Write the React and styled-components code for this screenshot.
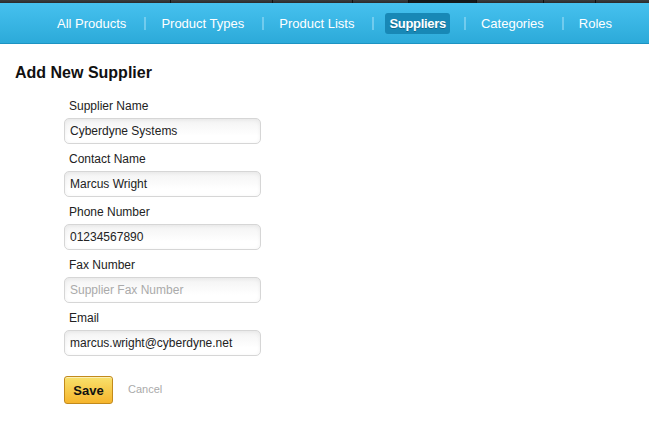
import React from "react";
import styled, { createGlobalStyle } from "styled-components";

const Global = createGlobalStyle`
  html, body { margin: 0; padding: 0; background: #fff; }
  body { font-family: "Liberation Sans", Arial, sans-serif; }
`;

const Page = styled.div`
  width: 649px;
  height: 426px;
  overflow: hidden;
  display: flex;
  flex-direction: column;
`;

const TopStrip = styled.div`
  display: flex;
  height: 3px;
  background: #111;
  gap: 1px;
`;

const StripSeg = styled.div`
  width: ${(p) => p.$w}px;
  flex: ${(p) => (p.$grow ? 1 : "none")};
  background: ${(p) => (p.$dark ? "#15191b" : "linear-gradient(#3a3d3f, #2a2c2e)")};
`;

const NavBar = styled.nav`
  height: 40px;
  display: flex;
  align-items: center;
  padding-left: 53px;
  background: linear-gradient(#46c1ef, #2caad9);
  border-bottom: 1px solid #1d93c2;
`;

const NavItem = styled.a`
  flex: none;
  white-space: nowrap;
  font-family: "Liberation Sans", Arial, sans-serif;
  font-size: 13px;
  color: #fff;
  padding: 3px 4px;
  line-height: 15px;
  border-radius: 3px;
  font-weight: ${(p) => (p.$active ? 700 : 400)};
  letter-spacing: ${(p) => (p.$active ? "-0.3px" : "0")};
  background: ${(p) => (p.$active ? "#1888b6" : "transparent")};
  text-shadow: ${(p) => (p.$active ? "0 1px 0 rgba(0,0,0,0.25)" : "none")};
`;

const NavSep = styled.span`
  flex: none;
  width: 2px;
  height: 13px;
  margin: 0 11px 0 14px;
  background: rgba(170, 225, 248, 0.5);
`;

const Content = styled.main`
  padding: 19px 15px 0 15px;
`;

const Title = styled.h2`
  margin: 0;
  font-size: 16px;
  line-height: 20px;
  font-weight: 700;
  color: #111;
`;

const Form = styled.form`
  margin-top: 16px;
  margin-left: 49px;
  display: flex;
  flex-direction: column;
`;

const Field = styled.div`
  display: flex;
  flex-direction: column;
  margin-bottom: 8px;
`;

const Label = styled.label`
  font-size: 12px;
  line-height: 14px;
  color: #222;
  margin-bottom: 5px;
  padding-left: 5px;
`;

const Input = styled.input`
  box-sizing: border-box;
  width: 197px;
  height: 26px;
  border: 1px solid #d6d6d6;
  border-radius: 5px;
  padding: 0 5px;
  font-family: "Liberation Sans", Arial, sans-serif;
  font-size: 12px;
  color: #222;
  background: linear-gradient(#f3f3f3, #ffffff 70%);
  box-shadow: inset 0 1px 4px rgba(0, 0, 0, 0.06);
  outline: none;
  &::placeholder { color: #aaa; }
`;

const Actions = styled.div`
  display: flex;
  align-items: center;
  margin-top: 12px;
  gap: 15px;
`;

const SaveButton = styled.button`
  box-sizing: border-box;
  width: 49px;
  height: 28px;
  border: 1px solid #c28a1c;
  border-radius: 3px;
  background: linear-gradient(#f8e16c, #f6b52c);
  box-shadow: inset 0 1px 0 rgba(255,255,255,0.5);
  font-family: "Liberation Sans", Arial, sans-serif;
  font-weight: 700;
  font-size: 13px;
  color: #111;
  padding: 0;
`;

const CancelLink = styled.a`
  font-size: 11px;
  color: #aaa;
  margin-top: -3px;
`;

const strip = [
  { w: 170 }, { w: 101 }, { w: 79 }, { w: 55 }, { w: 67, dark: true },
  { w: 66 }, { w: 51 }, { grow: true },
];

const navItems = ["All Products", "Product Types", "Product Lists", "Suppliers", "Categories", "Roles"];

const fields = [
  { label: "Supplier Name", value: "Cyberdyne Systems", placeholder: "Supplier Name" },
  { label: "Contact Name", value: "Marcus Wright", placeholder: "Contact Name" },
  { label: "Phone Number", value: "01234567890", placeholder: "Supplier Phone Number" },
  { label: "Fax Number", value: "", placeholder: "Supplier Fax Number" },
  { label: "Email", value: "marcus.wright@cyberdyne.net", placeholder: "Email" },
];

export default function App() {
  return (
    <Page>
      <Global />
      <TopStrip>
        {strip.map((s, i) => (
          <StripSeg key={i} $w={s.w} $dark={s.dark} $grow={s.grow} />
        ))}
      </TopStrip>
      <NavBar>
        {navItems.map((n, i) => (
          <React.Fragment key={n}>
            {i > 0 && <NavSep />}
            <NavItem $active={n === "Suppliers"}>{n}</NavItem>
          </React.Fragment>
        ))}
      </NavBar>
      <Content>
        <Title>Add New Supplier</Title>
        <Form onSubmit={(e) => e.preventDefault()}>
          {fields.map((f) => (
            <Field key={f.label}>
              <Label>{f.label}</Label>
              <Input defaultValue={f.value} placeholder={f.placeholder} />
            </Field>
          ))}
          <Actions>
            <SaveButton type="submit">Save</SaveButton>
            <CancelLink>Cancel</CancelLink>
          </Actions>
        </Form>
      </Content>
    </Page>
  );
}
